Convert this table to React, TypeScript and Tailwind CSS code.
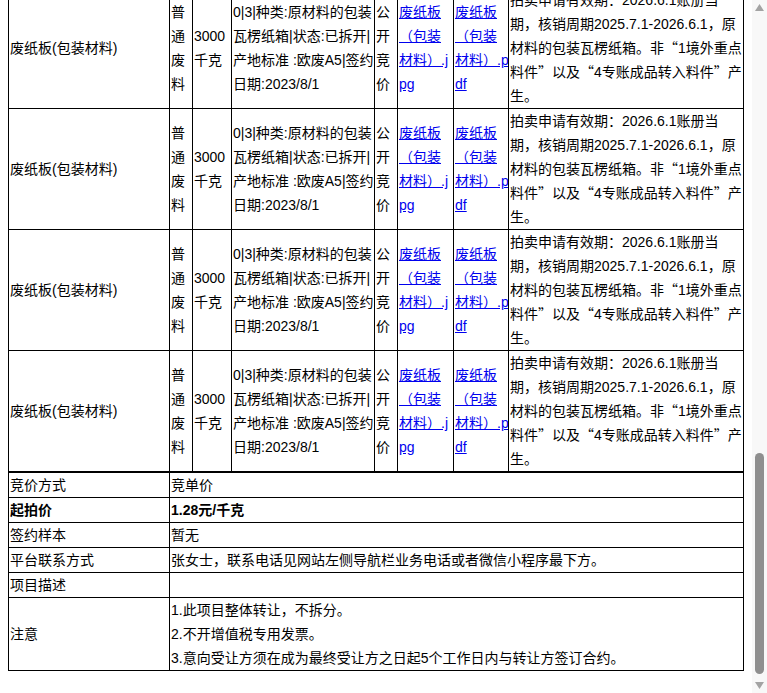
import React, { useLayoutEffect, useRef } from "react";

const cell = "border border-black px-px py-0 align-middle overflow-hidden whitespace-nowrap";
const link = "text-[#0000ee] underline";

// CJK curly quotes, kept from stretching the line box
function Q({ c }: { c: string }) {
  return <span className="font-['Noto_Sans_CJK_SC',sans-serif] leading-[0]">{c}</span>;
}

function ItemRow() {
  return (
    <tr>
      <td className={cell}>废纸板(包装材料)</td>
      <td className={cell}>
        普<br />通<br />废<br />料
      </td>
      <td className={cell}>
        3000
        <br />
        千克
      </td>
      <td className={cell}>
        0|3|种类:原材料的包装
        <br />
        瓦楞纸箱|状态:已拆开|
        <br />
        产地标准 :欧废A5|签约
        <br />
        日期:2023/8/1
      </td>
      <td className={cell}>
        公<br />开<br />竞<br />价
      </td>
      <td className={cell}>
        <a href="#" className={link}>
          废纸板
          <br />
          （包装
          <br />
          材料）.j
          <br />
          pg
        </a>
      </td>
      <td className={cell}>
        <a href="#" className={link}>
          废纸板
          <br />
          （包装
          <br />
          材料）.p
          <br />
          df
        </a>
      </td>
      <td className={cell}>
        拍卖申请有效期：2026.6.1账册当
        <br />
        期，核销周期2025.7.1-2026.6.1，原
        <br />
        材料的包装瓦楞纸箱。非<Q c="“" />1境外重点
        <br />
        料件<Q c="”" />以及<Q c="“" />4专账成品转入料件<Q c="”" />产
        <br />
        生。
      </td>
    </tr>
  );
}

const topInfo = [
  ["项目名称", "废纸板(包装材料)转让"],
  ["项目编号", "——"],
  ["转让方", "——"],
  ["所在地区", "——"],
  ["挂牌开始时间", "——"],
  ["挂牌结束时间", "——"],
  ["保证金", "——"],
  ["看货时间", "——"],
];

function Scrollbar() {
  return (
    <div className="flex w-[15px] shrink-0 flex-col bg-[#f8f8f8]">
      <div className="flex h-[15px] items-center justify-center">
        <svg width="9" height="7" viewBox="0 0 9 7">
          <polygon points="4.5,0 9,7 0,7" fill="#a3a3a3" />
        </svg>
      </div>
      <div className="flex flex-1 flex-col items-center">
        <div className="mt-auto mb-[4px] h-[221px] w-[9px] rounded-full bg-[#8f8f8f]" />
      </div>
      <div className="flex h-[15px] items-center justify-center">
        <svg width="9" height="7" viewBox="0 0 9 7">
          <polygon points="0,0 9,0 4.5,7" fill="#a3a3a3" />
        </svg>
      </div>
    </div>
  );
}

export default function App() {
  const box = useRef<HTMLDivElement>(null);

  useLayoutEffect(() => {
    const el = box.current;
    if (el) el.scrollTop = el.scrollHeight - el.clientHeight;
  }, []);

  return (
    <div className="flex h-[693px] w-[767px] bg-white text-[14px] leading-6 text-black font-['Liberation_Sans','Noto_Sans_CJK_SC',sans-serif]">
      <div ref={box} className="h-full w-[752px] overflow-hidden">
        <div className="px-2 pt-2 pb-[22px]">
          <div className="pb-4 text-center text-[18px] font-bold leading-8">项目详情</div>
          <table className="w-[735px] table-fixed">
            <colgroup>
              <col className="w-[161px]" />
              <col className="w-[574px]" />
            </colgroup>
            <tbody>
              {topInfo.map(([k, v]) => (
                <tr key={k}>
                  <td className={cell}>{k}</td>
                  <td className={cell}>{v}</td>
                </tr>
              ))}
            </tbody>
          </table>
          <table className="w-[735px] table-fixed">
            <colgroup>
              <col className="w-[161px]" />
              <col className="w-[23px]" />
              <col className="w-[39px]" />
              <col className="w-[143px]" />
              <col className="w-[23px]" />
              <col className="w-[56px]" />
              <col className="w-[55px]" />
              <col className="w-[235px]" />
            </colgroup>
            <tbody>
              <tr>
                <td className={cell}>物料名称</td>
                <td className={cell}>类<br />别</td>
                <td className={cell}>数量</td>
                <td className={cell}>描述</td>
                <td className={cell}>方<br />式</td>
                <td className={cell}>图片</td>
                <td className={cell}>附件</td>
                <td className={cell}>备注</td>
              </tr>
              {Array.from({ length: 12 }).map((_, i) => (
                <ItemRow key={i} />
              ))}
            </tbody>
          </table>
          <table className="w-[735px] table-fixed">
            <colgroup>
              <col className="w-[161px]" />
              <col className="w-[574px]" />
            </colgroup>
            <tbody>
              <tr>
                <td className={cell}>竞价方式</td>
                <td className={cell}>竞单价</td>
              </tr>
              <tr className="font-bold">
                <td className={cell}>起拍价</td>
                <td className={cell}>1.28元/千克</td>
              </tr>
              <tr>
                <td className={cell}>签约样本</td>
                <td className={cell}>暂无</td>
              </tr>
              <tr>
                <td className={cell}>平台联系方式</td>
                <td className={cell}>张女士，联系电话见网站左侧导航栏业务电话或者微信小程序最下方。</td>
              </tr>
              <tr>
                <td className={cell}>项目描述</td>
                <td className={cell}></td>
              </tr>
              <tr>
                <td className={cell}>注意</td>
                <td className={cell}>
                  <p>1.此项目整体转让，不拆分。</p>
                  <p>2.不开增值税专用发票。</p>
                  <p>3.意向受让方须在成为最终受让方之日起5个工作日内与转让方签订合约。</p>
                </td>
              </tr>
            </tbody>
          </table>
        </div>
      </div>
      <Scrollbar />
    </div>
  );
}
